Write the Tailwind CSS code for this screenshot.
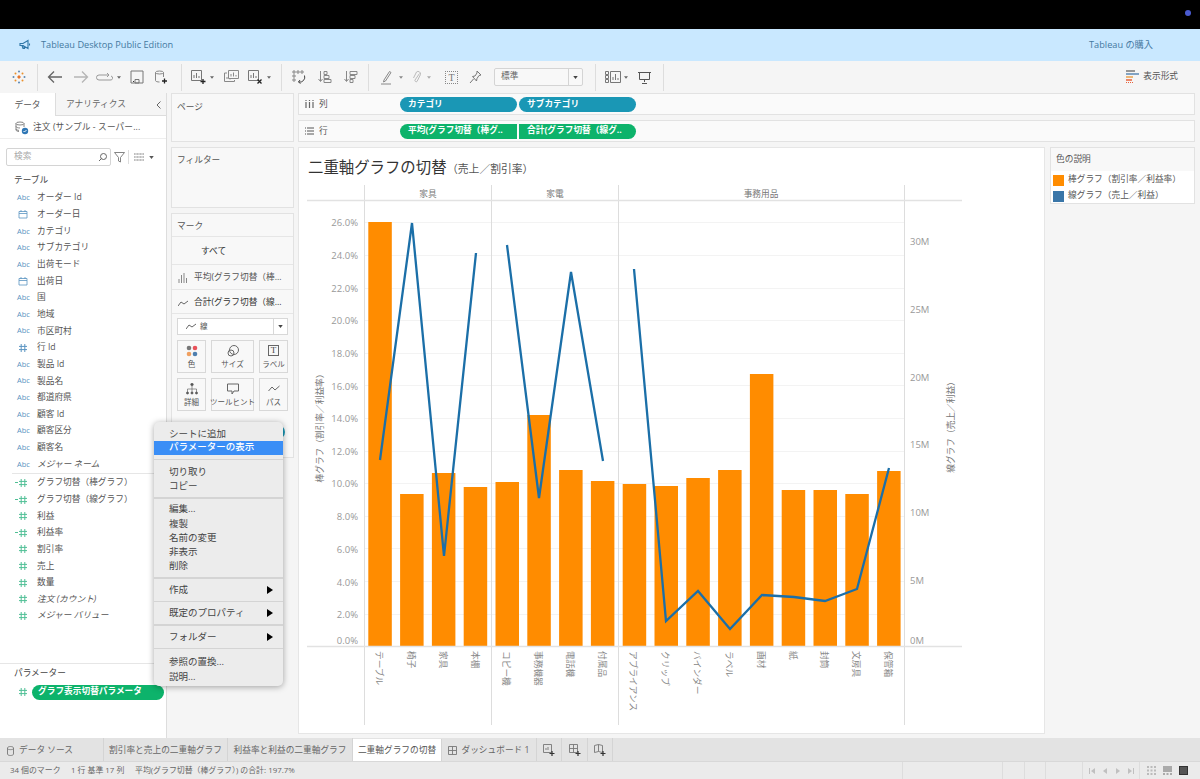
<!DOCTYPE html>
<html lang="ja">
<head>
  <meta charset="UTF-8">
  <title>Tableau Desktop Public Edition</title>
  <script src="https://cdn.jsdelivr.net/npm/@tailwindcss/browser@4"></script>
</head>
<body class="relative w-[1200px] h-[779px] overflow-hidden bg-[#f5f5f5] text-[#555] text-[8.7px] font-['Open_Sans','Noto_Sans_CJK_JP',sans-serif]">
  <!-- shared icons -->
  <svg class="hidden">
    <symbol id="hash" viewBox="0 0 10 10"><path d="M3.2 1v8M6.8 1v8M1 3.4h8M1 6.6h8" fill="none" stroke="currentColor" stroke-width="1"/></symbol>
    <symbol id="cal" viewBox="0 0 10 10"><path d="M1 2.5h8v6.5h-8zM1 4.5h8M3 1v2M7 1v2" fill="none" stroke="currentColor" stroke-width=".8"/></symbol>
    <symbol id="caret" viewBox="0 0 6 4"><path d="M0 0h6l-3 4z" fill="currentColor"/></symbol>
  </svg>

  <!-- top black strip -->
  <div class="relative h-[29px] bg-black">
    <span class="absolute left-[1185px] top-[10px] w-[6px] h-[6px] rounded-full bg-[#4a5bd0]"></span>
  </div>

  <!-- banner -->
  <div class="flex items-center h-[32px] bg-[#c9e8ff] text-[#44799f] text-[9.200px]">
    <svg class="ml-[19px] w-[12px] h-[12px]" viewBox="0 0 12 12" fill="none" stroke="#2f77a8" stroke-width="1.1"><path d="M1 4.5h3l5-3v8l-5-3h-3zM3 6.5l1 3h1.5l-1-3M10.500 4.500v2"/></svg>
    <span class="ml-[10px]">Tableau Desktop Public Edition</span>
    <span class="ml-auto mr-[47px]">Tableau の購入</span>
  </div>

  <!-- toolbar -->
  <div class="flex items-center h-[32px] bg-[#f5f5f5] text-[#777]">
    <div class="flex items-center justify-center w-[38px] h-[27px] border-r border-[#ddd]">
      <svg class="w-[14px] h-[14px]" viewBox="0 0 14 14"><g fill="#e8762c"><rect x="6" y="5.500" width="2" height="3"/><rect x="5.500" y="6" width="3" height="2"/></g><g fill="#5b87b2"><circle cx="7" cy="1.500" r="1"/><circle cx="7" cy="12.500" r="1"/><circle cx="1.500" cy="7" r="1"/><circle cx="12.500" cy="7" r="1"/></g><g fill="#eb912b"><circle cx="3.500" cy="3.500" r="1"/><circle cx="10.500" cy="3.500" r="1"/><circle cx="3.500" cy="10.500" r="1"/><circle cx="10.500" cy="10.500" r="1"/></g></svg>
    </div>
    <div class="flex items-center w-[144px] h-[27px] border-r border-[#ddd]">
      <svg class="ml-[9px] w-[16px] h-[14px]" viewBox="0 0 16 14" fill="none" stroke="#666" stroke-width="1.3"><path d="M15 7H2M7 1.500 1.500 7 7 12.500"/></svg>
      <svg class="ml-[10px] w-[16px] h-[14px]" viewBox="0 0 16 14" fill="none" stroke="#b5b5b5" stroke-width="1.3"><path d="M1 7h13M9 1.500 14.500 7 9 12.500"/></svg>
      <svg class="ml-[7px] w-[17px] h-[10px]" viewBox="0 0 17 10" fill="none" stroke="#999" stroke-width="1"><path d="M12 3H3a2 2 0 0 0 0 5h11a2 2 0 0 0 1-4M11 1l2 2-2 2"/></svg>
      <svg class="ml-[4px] w-[4px] h-[3px] text-[#666]"><use href="#caret"/></svg>
      <svg class="ml-[9px] w-[14px] h-[14px]" viewBox="0 0 14 14" fill="none" stroke="#777" stroke-width="1"><path d="M1 1h12v12H1zM5 9.500h4V13H5z"/><path d="M3 11.500h1" stroke="#333"/></svg>
      <svg class="ml-[10px] w-[14px] h-[14px]" viewBox="0 0 14 14" fill="none" stroke="#888" stroke-width="1"><ellipse cx="5.500" cy="2.500" rx="4" ry="1.500"/><path d="M1.500 2.500v8c0 1 2 1.500 4 1.500M9.500 2.500V7"/><path d="M10.500 8.500v5M8 11h5" stroke="#222" stroke-width="1.300"/></svg>
    </div>
    <div class="flex items-center w-[100px] h-[27px] border-r border-[#ddd]">
      <svg class="ml-[9px] w-[15px] h-[14px]" viewBox="0 0 15 14" fill="none" stroke="#777" stroke-width="1"><path d="M.5.500h10v10H.5zM3 8V5M5.500 8V3M8 8V6"/><path d="M12 9v5M9.500 11.500h5" stroke="#222" stroke-width="1.300"/></svg>
      <svg class="ml-[4px] w-[4px] h-[3px] text-[#666]"><use href="#caret"/></svg>
      <svg class="ml-[10px] w-[15px] h-[14px]" viewBox="0 0 15 14" fill="none" stroke="#888" stroke-width="1"><path d="M4.500.500h10v8h-10zM7 6.500V4M9.500 6.500V2.500M12 6.500V5M3 3H.5v8.500h10V10M3 9V7M6 9.500V8"/></svg>
      <svg class="ml-[9px] w-[15px] h-[14px]" viewBox="0 0 15 14" fill="none" stroke="#777" stroke-width="1"><path d="M.5.500h10v10H.5zM3 8V5M5.500 8V3M8 8V6"/><path d="M9.500 9.500l4 4M13.500 9.500l-4 4" stroke="#222" stroke-width="1.300"/></svg>
      <svg class="ml-[4px] w-[4px] h-[3px] text-[#666]"><use href="#caret"/></svg>
    </div>
    <div class="flex items-center w-[87px] h-[27px] border-r border-[#ddd] text-[#888]">
      <svg class="ml-[10px] w-[14px] h-[14px]" viewBox="0 0 14 14" fill="none" stroke="#888" stroke-width="1"><path d="M1 1h2v2H1zM5 1h2v2H5zM9 1h2v2H9zM1 5h2v2H1zM1 9h2v2H1z"/><path d="M12.500 5.500a5 5 0 0 1-6 6.500M8 10l-1.500 2 2 1.500" stroke="#444"/></svg>
      <svg class="ml-[12px] w-[14px] h-[14px]" viewBox="0 0 14 14" fill="none" stroke="#888" stroke-width="1"><path d="M2.500 1v10M.5 9l2 2.500L4.500 9M6 1.500h3v3H6zM6 5.500h5v3H6zM6 9.500h7v3H6z"/></svg>
      <svg class="ml-[12px] w-[14px] h-[14px]" viewBox="0 0 14 14" fill="none" stroke="#888" stroke-width="1"><path d="M2.500 1v10M.5 9l2 2.500L4.500 9M6 1.500h7v3H6zM6 5.500h5v3H6zM6 9.500h3v3H6z"/></svg>
    </div>
    <div class="flex items-center w-[227px] h-[27px] border-r border-[#ddd] text-[#444]">
      <svg class="ml-[12px] w-[11px] h-[15px]" viewBox="0 0 11 15" fill="none" stroke="#888" stroke-width="1"><path d="M3 10 8.500 1.500l1.500 1L4.500 11l-2 1zM0 14h10"/></svg>
      <svg class="ml-[7px] w-[4px] h-[3px] text-[#888]"><use href="#caret"/></svg>
      <svg class="ml-[9px] w-[10px] h-[14px]" viewBox="0 0 10 14" fill="none" stroke="#bbb" stroke-width="1"><path d="M7.500 3.500 3 10a1.300 1.300 0 0 0 2 1.500l3.500-7a2.500 2.500 0 0 0-4-2.500L1.500 8"/></svg>
      <svg class="ml-[5px] w-[4px] h-[3px] text-[#aaa]"><use href="#caret"/></svg>
      <div class="ml-[14px] flex items-center justify-center w-[13px] h-[13px] border border-dotted border-[#888] font-['Liberation_Serif',serif] text-[10px] text-[#777]">T</div>
      <svg class="ml-[11px] w-[13px] h-[14px]" viewBox="0 0 13 14" fill="none" stroke="#777" stroke-width="1"><path d="M8 1l4 4-2 .5-2 3-.5 2.500L3.500 6.500 6 6l2-3zM4.500 9 1 13"/></svg>
      <div class="ml-[12px] flex items-center w-[89px] h-[18px] bg-[#f8f8f8] border border-[#d4d4d4] rounded-[2px]">
        <span class="ml-[6px] flex-1 text-[#666]">標準</span>
        <div class="flex items-center justify-center w-[14px] h-full border-l border-[#d4d4d4]"><svg class="w-[5px] h-[3px] text-[#444]"><use href="#caret"/></svg></div>
      </div>
    </div>
    <div class="flex items-center w-[68px] h-[27px] border-r border-[#ddd]">
      <svg class="ml-[9px] w-[16px] h-[12px]" viewBox="0 0 16 12" fill="none" stroke="#777" stroke-width="1"><path d="M.5.500h3v3h-3zM.5 4.500h3v3h-3zM.5 8.500h3v3h-3zM5.500.500h10v11h-10zM8 9V6M10.500 9V3M13 9V7"/></svg>
      <svg class="ml-[3px] w-[4px] h-[3px] text-[#666]"><use href="#caret"/></svg>
      <svg class="ml-[10px] w-[13px] h-[13px]" viewBox="0 0 13 13" fill="none" stroke="#555" stroke-width="1"><path d="M0 1.500h13M1.500 1.500v7h10v-7M6.500 8.500V11M4 12.500h5"/></svg>
    </div>
    <div class="ml-auto mr-[22px] flex items-center text-[#555]">
      <svg class="w-[13px] h-[13px] mr-[4px]" viewBox="0 0 13 13"><path d="M0 1h9" stroke="#777" stroke-width="1.500"/><path d="M0 4h13" stroke="#5b87b2" stroke-width="1.500"/><path d="M0 7h7" stroke="#e8a24c" stroke-width="1.500"/><path d="M0 10h6" stroke="#e8623c" stroke-width="1.500"/><path d="M0 12.500h7" stroke="#e8623c" stroke-width="1" stroke-dasharray="1 1"/></svg>
      <span>表示形式</span>
    </div>
  </div>

  <!-- main area -->
  <div class="flex h-[645px]">
    <!-- data pane -->
    <div class="flex flex-col w-[167px] h-full bg-white border-r border-[#ddd]">
      <div class="flex h-[23px] shrink-0">
        <div class="flex items-center justify-center w-[56px] pt-[2px] border-r border-[#ddd]">データ</div>
        <div class="flex items-center flex-1 pl-[10px] pt-[2px] bg-[#f5f5f5] border-b border-[#ddd] text-[#666]">アナリティクス<svg class="ml-auto mr-[5px] w-[5px] h-[8px]" viewBox="0 0 5 8" fill="none" stroke="#666"><path d="M4.500.500 1 4l3.500 3.500"/></svg></div>
      </div>
      <div class="flex items-center h-[23px] pt-[2px] shrink-0 border-b border-[#eee]">
        <svg class="ml-[15px] w-[14px] h-[14px]" viewBox="0 0 14 14" fill="none" stroke="#777" stroke-width=".9"><ellipse cx="5" cy="2.500" rx="4" ry="1.500"/><path d="M1 2.500v6.500c0 .8 1.500 1.300 3 1.500M9 2.500V6M1 5.500c0 .8 2 1.500 4 1.500M1 8c0 .8 1.500 1.200 3 1.400"/><circle cx="10" cy="10" r="3.200" fill="#2f77b5" stroke="none"/><path d="M8.500 10l1 1 2-2" stroke="#fff"/></svg>
        <span class="ml-[4px] tracking-[.1px]">注文 (サンプル - スーパー...</span>
      </div>
      <div class="flex items-center mt-[9px] h-[18px] shrink-0">
        <div class="flex items-center ml-[6px] w-[105px] h-[18px] border border-[#d4d4d4] rounded-[2px] pl-[7px] text-[#aaa]">検索
          <svg class="ml-auto mr-[3px] w-[9px] h-[9px]" viewBox="0 0 9 9" fill="none" stroke="#666"><circle cx="5.500" cy="3.500" r="3"/><path d="M3.500 5.500 1 8"/></svg>
        </div>
        <svg class="ml-[3px] w-[11px] h-[11px]" viewBox="0 0 11 11" fill="none" stroke="#777" stroke-width=".9"><path d="M.5.500h10L6.500 5.500V10l-2-1V5.500z"/></svg>
        <span class="ml-[3px] w-px h-[14px] bg-[#ddd]"></span>
        <svg class="ml-[5px] w-[10px] h-[8px]" viewBox="0 0 10 8"><path d="M0 1h10M0 4h10M0 7h10" stroke="#aaa" stroke-width="1.500"/><path d="M2 0v8M5 0v8M8 0v8" stroke="#fff" stroke-width=".7"/></svg>
        <svg class="ml-[5px] w-[5px] h-[3px] text-[#555]"><use href="#caret"/></svg>
      </div>
      <div class="flex items-center mt-[8px] h-[14px] pl-[14px] text-[#444] shrink-0">テーブル</div>

      <!-- field list -->
      <div class="flex-1 mt-[1.500px]">
        <div class="flex items-center h-[16.67px]"><span class="w-[37px] pl-[17px] text-[7.500px] text-[#5a94c2]">Abc</span>オーダー Id</div>
        <div class="flex items-center h-[16.67px]"><span class="w-[37px] pl-[18px]"><svg class="w-[10px] h-[10px] text-[#5a94c2]"><use href="#cal"/></svg></span>オーダー日</div>
        <div class="flex items-center h-[16.67px]"><span class="w-[37px] pl-[17px] text-[7.500px] text-[#5a94c2]">Abc</span>カテゴリ</div>
        <div class="flex items-center h-[16.67px]"><span class="w-[37px] pl-[17px] text-[7.500px] text-[#5a94c2]">Abc</span>サブカテゴリ</div>
        <div class="flex items-center h-[16.67px]"><span class="w-[37px] pl-[17px] text-[7.500px] text-[#5a94c2]">Abc</span>出荷モード</div>
        <div class="flex items-center h-[16.67px]"><span class="w-[37px] pl-[18px]"><svg class="w-[10px] h-[10px] text-[#5a94c2]"><use href="#cal"/></svg></span>出荷日</div>
        <div class="flex items-center h-[16.67px]"><span class="w-[37px] pl-[17px] text-[7.500px] text-[#5a94c2]">Abc</span>国</div>
        <div class="flex items-center h-[16.67px]"><span class="w-[37px] pl-[17px] text-[7.500px] text-[#5a94c2]">Abc</span>地域</div>
        <div class="flex items-center h-[16.67px]"><span class="w-[37px] pl-[17px] text-[7.500px] text-[#5a94c2]">Abc</span>市区町村</div>
        <div class="flex items-center h-[16.67px]"><span class="w-[37px] pl-[18px]"><svg class="w-[10px] h-[10px] text-[#5a94c2]"><use href="#hash"/></svg></span>行 Id</div>
        <div class="flex items-center h-[16.67px]"><span class="w-[37px] pl-[17px] text-[7.500px] text-[#5a94c2]">Abc</span>製品 Id</div>
        <div class="flex items-center h-[16.67px]"><span class="w-[37px] pl-[17px] text-[7.500px] text-[#5a94c2]">Abc</span>製品名</div>
        <div class="flex items-center h-[16.67px]"><span class="w-[37px] pl-[17px] text-[7.500px] text-[#5a94c2]">Abc</span>都道府県</div>
        <div class="flex items-center h-[16.67px]"><span class="w-[37px] pl-[17px] text-[7.500px] text-[#5a94c2]">Abc</span>顧客 Id</div>
        <div class="flex items-center h-[16.67px]"><span class="w-[37px] pl-[17px] text-[7.500px] text-[#5a94c2]">Abc</span>顧客区分</div>
        <div class="flex items-center h-[16.67px]"><span class="w-[37px] pl-[17px] text-[7.500px] text-[#5a94c2]">Abc</span>顧客名</div>
        <div class="flex items-center h-[16.67px]"><span class="w-[37px] pl-[17px] text-[7.500px] text-[#5a94c2]">Abc</span><i>メジャー ネーム</i></div>
        <div class="ml-[12px] h-[2px] border-t border-[#e6e6e6]"></div>
        <div class="flex items-center h-[16.63px]"><span class="flex items-center w-[37px] pl-[15px]"><span class="w-[3px] h-px bg-[#4fbf95]"></span><svg class="w-[10px] h-[10px] text-[#4fbf95]"><use href="#hash"/></svg></span>グラフ切替（棒グラフ）</div>
        <div class="flex items-center h-[16.63px]"><span class="flex items-center w-[37px] pl-[15px]"><span class="w-[3px] h-px bg-[#4fbf95]"></span><svg class="w-[10px] h-[10px] text-[#4fbf95]"><use href="#hash"/></svg></span>グラフ切替（線グラフ）</div>
        <div class="flex items-center h-[16.63px]"><span class="w-[37px] pl-[18px]"><svg class="w-[10px] h-[10px] text-[#4fbf95]"><use href="#hash"/></svg></span>利益</div>
        <div class="flex items-center h-[16.63px]"><span class="flex items-center w-[37px] pl-[15px]"><span class="w-[3px] h-px bg-[#4fbf95]"></span><svg class="w-[10px] h-[10px] text-[#4fbf95]"><use href="#hash"/></svg></span>利益率</div>
        <div class="flex items-center h-[16.63px]"><span class="w-[37px] pl-[18px]"><svg class="w-[10px] h-[10px] text-[#4fbf95]"><use href="#hash"/></svg></span>割引率</div>
        <div class="flex items-center h-[16.63px]"><span class="w-[37px] pl-[18px]"><svg class="w-[10px] h-[10px] text-[#4fbf95]"><use href="#hash"/></svg></span>売上</div>
        <div class="flex items-center h-[16.63px]"><span class="w-[37px] pl-[18px]"><svg class="w-[10px] h-[10px] text-[#4fbf95]"><use href="#hash"/></svg></span>数量</div>
        <div class="flex items-center h-[16.63px]"><span class="w-[37px] pl-[18px]"><svg class="w-[10px] h-[10px] text-[#4fbf95]"><use href="#hash"/></svg></span><i>注文 (カウント)</i></div>
        <div class="flex items-center h-[16.63px]"><span class="w-[37px] pl-[18px]"><svg class="w-[10px] h-[10px] text-[#4fbf95]"><use href="#hash"/></svg></span><i>メジャー バリュー</i></div>
      </div>

      <!-- parameters -->
      <div class="h-[75px] shrink-0 border-t border-[#e6e6e6]">
        <div class="flex items-center h-[20px] pl-[14px] text-[#444]">パラメーター</div>
        <div class="flex items-center h-[16px]">
          <svg class="ml-[18px] w-[10px] h-[10px] text-[#4fbf95]"><use href="#hash"/></svg>
          <div class="ml-[4px] flex items-center w-[132px] h-[15px] pl-[6px] rounded-full bg-[#0db36b] text-white font-bold">グラフ表示切替パラメータ</div>
        </div>
      </div>
    </div>

    <!-- cards column -->
    <div class="flex flex-col ml-[4px] w-[123px] shrink-0">
      <div class="h-[49px] px-[5px] pt-[7px] bg-[#f8f8f8] border border-[#e2e2e2]">ページ</div>
      <div class="mt-[5px] h-[61px] px-[5px] pt-[6px] bg-[#f8f8f8] border border-[#e2e2e2]">フィルター</div>
      <div class="mt-[5px] h-[245px] bg-[#f8f8f8] border border-[#e2e2e2]">
        <div class="flex items-center h-[23px] pl-[5px] pt-[3px] border-b border-[#e6e6e6]">マーク</div>
        <div class="flex items-center h-[28px] pl-[29px] pt-[3px] border-b border-[#e6e6e6] text-[#333]">すべて</div>
        <div class="flex items-center h-[25px] pl-[6px] pt-[2px] border-b border-[#e6e6e6]">
          <svg class="w-[10px] h-[10px]" viewBox="0 0 10 10" stroke="#888"><path d="M1 10V6M3.500 10V2M6 10V0M8.500 10V5"/></svg>
          <span class="ml-[6px]">平均(グラフ切替（棒...</span>
        </div>
        <div class="flex items-center h-[24px] pl-[6px] pt-[3px] border-b border-[#e6e6e6] text-[#333]">
          <svg class="w-[10px] h-[7px]" viewBox="0 0 10 7" fill="none" stroke="#666"><path d="M0 6 3 2l3 2 4-3"/></svg>
          <span class="ml-[6px]">合計(グラフ切替（線...</span>
        </div>
        <div class="flex items-center mt-[4px] mx-[5px] h-[17px] bg-white border border-[#d8d8d8]">
          <svg class="ml-[8px] w-[10px] h-[7px]" viewBox="0 0 10 7" fill="none" stroke="#666"><path d="M0 6 3 2l3 2 4-3"/></svg>
          <span class="ml-[4px] flex-1 text-[7.500px]">線</span>
          <div class="flex items-center justify-center w-[14px] h-full border-l border-[#d8d8d8]"><svg class="w-[5px] h-[3px] text-[#444]"><use href="#caret"/></svg></div>
        </div>
        <div class="flex mt-[5px] mx-[5px] gap-[5px]">
          <div class="flex flex-col items-center w-[29px] h-[33px] pt-[4px] border border-[#d8d8d8] text-[7.500px]">
            <svg class="w-[12px] h-[12px]" viewBox="0 0 12 12"><circle cx="3" cy="3" r="2.300" fill="#777"/><circle cx="9" cy="3" r="2.300" fill="#e8525a"/><circle cx="3" cy="9" r="2.300" fill="#f0a060"/><circle cx="9" cy="9" r="2.300" fill="#4e7fae"/></svg>
            <span class="mt-[2px]">色</span>
          </div>
          <div class="flex flex-col items-center w-[43px] h-[33px] pt-[4px] border border-[#d8d8d8] text-[7.500px]">
            <svg class="w-[12px] h-[12px]" viewBox="0 0 12 12" fill="none" stroke="#666"><circle cx="7" cy="5" r="4.500"/><circle cx="4" cy="8" r="3"/></svg>
            <span class="mt-[2px]">サイズ</span>
          </div>
          <div class="flex flex-col items-center w-[29px] h-[33px] pt-[4px] border border-[#d8d8d8] text-[7.500px]">
            <div class="flex items-center justify-center w-[11px] h-[11px] border border-[#666] font-['Liberation_Serif',serif] text-[9px] text-[#444]">T</div>
            <span class="mt-[3px]">ラベル</span>
          </div>
        </div>
        <div class="flex mt-[5px] mx-[5px] gap-[5px]">
          <div class="flex flex-col items-center w-[29px] h-[33px] pt-[4px] border border-[#d8d8d8] text-[7.500px]">
            <svg class="w-[12px] h-[12px]" viewBox="0 0 12 12" fill="#555" stroke="#555" stroke-width=".6"><circle cx="6" cy="1.500" r="1.300"/><circle cx="1.500" cy="10" r="1.100"/><circle cx="6" cy="10" r="1.100"/><circle cx="10.500" cy="10" r="1.100"/><path d="M6 3v7M1.500 9V6h9v3" fill="none"/></svg>
            <span class="mt-[2px]">詳細</span>
          </div>
          <div class="flex flex-col items-center w-[43px] h-[33px] pt-[4px] border border-[#d8d8d8] text-[7.500px]">
            <svg class="w-[12px] h-[12px]" viewBox="0 0 12 12" fill="none" stroke="#666"><path d="M.5 1h11v7H7l-2 3V8H.5z"/></svg>
            <span class="mt-[2px] whitespace-nowrap">ツールヒント</span>
          </div>
          <div class="flex flex-col items-center w-[29px] h-[33px] pt-[4px] border border-[#d8d8d8] text-[7.500px]">
            <svg class="w-[12px] h-[12px]" viewBox="0 0 12 12" fill="none" stroke="#666"><path d="M.5 8 4 4l3 3 4.500-4"/></svg>
            <span class="mt-[2px]">パス</span>
          </div>
        </div>
      </div>
    </div>

    <!-- shelves and view -->
    <div class="flex flex-col ml-[4px] w-[897px] shrink-0">
      <div class="flex items-center h-[22px] bg-[#fafafa] border border-[#e2e2e2]">
        <div class="flex items-center w-[101px] pl-[6px] pt-[1px]">
          <svg class="w-[9px] h-[8px]" viewBox="0 0 9 8" stroke="#666" stroke-width="1.200"><path d="M1 2v6M4.500 2v6M8 2v6"/><path d="M1 0v1M4.500 0v1M8 0v1"/></svg>
          <span class="ml-[5px]">列</span>
        </div>
        <div class="flex items-center w-[117px] h-[15px] pl-[8px] pt-[1px] rounded-full bg-[#1a97b5] text-white font-bold">カテゴリ</div>
        <div class="ml-[2px] flex items-center w-[117px] h-[15px] pl-[8px] pt-[1px] rounded-full bg-[#1a97b5] text-white font-bold">サブカテゴリ</div>
      </div>
      <div class="flex items-center mt-[5px] h-[22px] bg-[#fafafa] border border-[#e2e2e2]">
        <div class="flex items-center w-[101px] pl-[6px] pt-[1px]">
          <svg class="w-[9px] h-[8px]" viewBox="0 0 9 8" stroke="#555"><path d="M2 1h7M2 4h7M2 7h7M0 1h1M0 4h1M0 7h1"/></svg>
          <span class="ml-[5px]">行</span>
        </div>
        <div class="flex items-center w-[117px] h-[15px] pl-[8px] rounded-l-full bg-[#0db36b] text-white font-bold whitespace-nowrap">平均(グラフ切替（棒グ..</div>
        <div class="ml-[2px] flex items-center w-[117px] h-[15px] pl-[8px] rounded-r-full bg-[#0db36b] text-white font-bold whitespace-nowrap">合計(グラフ切替（線グ..</div>
      </div>
      <div class="flex mt-[5px]">
        <!-- view -->
        <div class="w-[747px] h-[587px] bg-white border border-[#e6e6e6]">
          <svg class="block w-[745px] h-[585px]" viewBox="299 148 745 585" fill="#999" font-size="9.500">
            <text x="308" y="173" font-size="15.400" fill="#333">二重軸グラフの切替</text>
            <text x="447" y="173" font-size="10.800" fill="#555" class="[text-spacing-trim:space-all]">（売上／割引率）</text>
            <!-- gridlines -->
            <g stroke="#f3f3f3" stroke-width="1">
              <path d="M365 222.500h539M365 255.500h539M365 288.500h539M365 320.500h539M365 353.500h539M365 385.500h539M365 418.500h539M365 451.500h539M365 483.500h539M365 516.500h539M365 548.500h539M365 581.500h539M365 614.500h539"/>
            </g>
            <!-- bars -->
            <g fill="#ff8c00">
              <rect x="368.300" y="222" width="23.500" height="424"/>
              <rect x="400.100" y="494" width="23.500" height="152"/>
              <rect x="431.900" y="473" width="23.500" height="173"/>
              <rect x="463.700" y="487" width="23.500" height="159"/>
              <rect x="495.500" y="482" width="23.500" height="164"/>
              <rect x="527.300" y="415" width="23.500" height="231"/>
              <rect x="559.100" y="470" width="23.500" height="176"/>
              <rect x="590.900" y="481" width="23.500" height="165"/>
              <rect x="622.700" y="484" width="23.500" height="162"/>
              <rect x="654.500" y="486" width="23.500" height="160"/>
              <rect x="686.300" y="478" width="23.500" height="168"/>
              <rect x="718.100" y="470" width="23.500" height="176"/>
              <rect x="749.900" y="374" width="23.500" height="272"/>
              <rect x="781.700" y="490" width="23.500" height="156"/>
              <rect x="813.500" y="490" width="23.500" height="156"/>
              <rect x="845.300" y="494" width="23.500" height="152"/>
              <rect x="877.100" y="471" width="23.500" height="175"/>
            </g>
            <!-- separators -->
            <g stroke="#ddd" stroke-width="1">
              <path d="M364.500 185v540M491.500 185v540M618.500 185v540M904.500 185v540"/>
            </g>
            <path d="M307 200.500h655M307 646.500h655" stroke="#e2e2e2" stroke-width="1.500"/>
            <!-- lines -->
            <g fill="none" stroke="#1b6fa8" stroke-width="2.300" stroke-linejoin="miter">
              <path d="M380 460 412 223 444 556 476 253"/>
              <path d="M507 245 539 498 571 272 603 461"/>
              <path d="M634 269 666 621 698 591 730 629 762 595 794 597 825 601 857 589 889 468"/>
            </g>
            <!-- headers -->
            <g text-anchor="middle" font-size="8.700" fill="#777">
              <text x="428" y="197">家具</text>
              <text x="555" y="197">家電</text>
              <text x="761" y="197">事務用品</text>
            </g>
            <!-- left axis -->
            <g text-anchor="end">
              <text x="358" y="226">26.0%</text><text x="358" y="259">24.0%</text><text x="358" y="292">22.0%</text><text x="358" y="324">20.0%</text><text x="358" y="357">18.0%</text><text x="358" y="390">16.0%</text><text x="358" y="422">14.0%</text><text x="358" y="455">12.0%</text><text x="358" y="487">10.0%</text><text x="358" y="520">8.0%</text><text x="358" y="553">6.0%</text><text x="358" y="586">4.0%</text><text x="358" y="618">2.0%</text><text x="358" y="644">0.0%</text>
            </g>
            <!-- right axis -->
            <g>
              <text x="910" y="245">30M</text><text x="910" y="313">25M</text><text x="910" y="381">20M</text><text x="910" y="448">15M</text><text x="910" y="516">10M</text><text x="910" y="584">5M</text><text x="910" y="644">0M</text>
            </g>
            <text transform="translate(323 426) rotate(-90)" text-anchor="middle" font-size="8.700" fill="#777">棒グラフ（割引率／利益率）</text>
            <text transform="translate(954 425) rotate(-90)" text-anchor="middle" font-size="8.700" fill="#777">線グラフ（売上／利益）</text>
            <!-- sub categories -->
            <g font-size="8.700" fill="#888">
              <text transform="translate(376 651) rotate(90)">テーブル</text>
              <text transform="translate(408 651) rotate(90)">椅子</text>
              <text transform="translate(440 651) rotate(90)">家具</text>
              <text transform="translate(472 651) rotate(90)">本棚</text>
              <text transform="translate(503 651) rotate(90)">コピー機</text>
              <text transform="translate(535 651) rotate(90)">事務機器</text>
              <text transform="translate(567 651) rotate(90)">電話機</text>
              <text transform="translate(599 651) rotate(90)">付属品</text>
              <text transform="translate(630 651) rotate(90)">アプライアンス</text>
              <text transform="translate(662 651) rotate(90)">クリップ</text>
              <text transform="translate(694 651) rotate(90)">バインダー</text>
              <text transform="translate(726 651) rotate(90)">ラベル</text>
              <text transform="translate(758 651) rotate(90)">画材</text>
              <text transform="translate(790 651) rotate(90)">紙</text>
              <text transform="translate(821 651) rotate(90)">封筒</text>
              <text transform="translate(853 651) rotate(90)">文房具</text>
              <text transform="translate(885 651) rotate(90)">保管箱</text>
            </g>
          </svg>
        </div>
        <!-- legend -->
        <div class="ml-[5px] w-[145px] h-[57px] bg-white border border-[#e2e2e2]">
          <div class="flex items-center h-[23px] pl-[5px] pt-[1px] bg-[#f8f8f8]">色の説明</div>
          <div class="flex items-center h-[16px] pl-[2px] mt-[1px]"><span class="w-[11px] h-[11px] bg-[#ff8c00] mr-[4px]"></span>棒グラフ（割引率／利益率）</div>
          <div class="flex items-center h-[16px] pl-[2px]"><span class="w-[11px] h-[11px] bg-[#3a76a8] mr-[4px]"></span>線グラフ（売上／利益）</div>
        </div>
      </div>
    </div>
  </div>

  <!-- sheet tabs -->
  <div class="flex h-[24px] bg-[#e3e3e3] border-b border-[#d8d8d8] text-[#666]">
    <div class="flex items-center w-[104px] pl-[7px] pt-[2px] border-r border-[#d4d4d4]">
      <svg class="w-[7px] h-[10px]" viewBox="0 0 7 10" fill="none" stroke="#777" stroke-width=".9"><path d="M.5 2v6c0 2 6 2 6 0V2c0-2-6-2-6 0zM.5 2.500c0 1.500 6 1.500 6 0"/></svg>
      <span class="ml-[5px]">データ ソース</span>
    </div>
    <div class="flex items-center justify-center w-[124px] pt-[2px] border-r border-[#d4d4d4]">割引率と売上の二重軸グラフ</div>
    <div class="flex items-center justify-center w-[125px] pt-[2px] border-r border-[#d4d4d4]">利益率と利益の二重軸グラフ</div>
    <div class="flex items-center justify-center w-[89px] mt-px pt-[1px] bg-white border-r border-[#d4d4d4] text-[#555]">二重軸グラフの切替</div>
    <div class="flex items-center justify-center w-[95px] pt-[2px] border-r border-[#d4d4d4]">
      <svg class="w-[9px] h-[9px] mr-[4px]" viewBox="0 0 9 9" fill="none" stroke="#777" stroke-width=".9"><path d="M.5.500h8v8h-8zM.5 4.500h8M4.500.500v8"/></svg>
      ダッシュボード 1
    </div>
    <div class="flex items-center justify-center w-[25px] border-r border-[#d4d4d4]">
      <svg class="w-[12px] h-[12px]" viewBox="0 0 12 12" fill="none" stroke="#777" stroke-width=".9"><path d="M.5.500h8v8h-8zM3 6V4M5 6V3"/><path d="M9 7v5M6.500 9.500h5" stroke="#333" stroke-width="1.200"/></svg>
    </div>
    <div class="flex items-center justify-center w-[26px] border-r border-[#d4d4d4]">
      <svg class="w-[12px] h-[12px]" viewBox="0 0 12 12" fill="none" stroke="#777" stroke-width=".9"><path d="M.5.500h8v8h-8zM.5 4.500h8M4.500.500v8"/><path d="M9 7v5M6.500 9.500h5" stroke="#333" stroke-width="1.200"/></svg>
    </div>
    <div class="flex items-center justify-center w-[25px] border-r border-[#d4d4d4]">
      <svg class="w-[12px] h-[12px]" viewBox="0 0 12 12" fill="none" stroke="#777" stroke-width=".9"><path d="M.5 1.500 4.500.500l4 1v7l-4-1-4 1zM4.500.500v7"/><path d="M9 7v5M6.500 9.500h5" stroke="#333" stroke-width="1.200"/></svg>
    </div>
  </div>

  <!-- status bar -->
  <div class="flex items-center h-[17px] bg-[#ebebeb] text-[#666] text-[7.900px]">
    <span class="w-[61px] ml-[10px] pt-[1px]">34 個のマーク</span>
    <span class="w-[64px] pt-[1px]">1 行 基準 17 列</span>
    <span class="pt-[1px]">平均(グラフ切替（棒グラフ）) の合計: 197.7%</span>
    <div class="ml-auto flex items-center h-full">
      <span class="w-[100px] h-full border-l border-[#ddd]"></span>
      <span class="w-[22px] h-full border-l border-[#ddd]"></span>
      <span class="w-[21px] h-full border-l border-[#ddd]"></span>
      <span class="w-[37px] h-full border-l border-[#ddd]"></span>
      <div class="flex items-center w-[57px] h-full pl-[6px] gap-[7px] border-l border-[#ddd]">
        <svg class="w-[6px] h-[6px]" viewBox="0 0 6 6" fill="#c0c0c0"><path d="M0 0h1v6H0zM6 0v6L2 3z"/></svg>
        <svg class="w-[6px] h-[6px]" viewBox="0 0 6 6" fill="#c0c0c0"><path d="M5 0v6L1 3z"/></svg>
        <svg class="w-[6px] h-[6px]" viewBox="0 0 6 6" fill="#c0c0c0"><path d="M1 0v6l4-3z"/></svg>
        <svg class="w-[6px] h-[6px]" viewBox="0 0 6 6" fill="#c0c0c0"><path d="M5 0h1v6H5zM0 0v6l4-3z"/></svg>
      </div>
      <div class="flex items-center w-[61px] h-full pl-[7px] gap-[7px] border-l border-[#ddd]">
        <svg class="w-[9px] h-[9px]" viewBox="0 0 9 9" fill="#bbb"><path d="M0 0h2v2H0zM3.500 0h2v2h-2zM7 0h2v2H7zM0 3.500h2v2H0zM3.500 3.500h2v2h-2zM7 3.500h2v2H7zM0 7h2v2H0zM3.500 7h2v2h-2zM7 7h2v2H7z"/></svg>
        <svg class="w-[9px] h-[9px]" viewBox="0 0 9 9" fill="#aaa"><path d="M0 0h9v6H0zM0 7h2v2H0zM3.500 7h2v2h-2zM7 7h2v2H7z"/></svg>
        <span class="w-[9px] h-[9px] bg-[#555] border border-[#333]"></span>
      </div>
    </div>
  </div>

  <!-- marks pill peeking out from the context menu -->
  <span class="absolute left-[276px] top-[425px] w-[9px] h-[14px] rounded-r-full bg-[#1a97b5]"></span>

  <!-- context menu -->
  <div class="absolute left-[154px] top-[422px] flex flex-col w-[129px] h-[264px] pt-[5px] rounded-[5px] bg-[#ececec] shadow-[0_1px_6px_rgba(0,0,0,.35)] text-[9.500px] text-[#444]">
    <div class="flex items-center h-[13.500px] pl-[15px]">シートに追加</div>
    <div class="flex items-center h-[14px] pl-[15px] bg-[#3a8ef6] text-white font-medium">パラメーターの表示</div>
    <div class="mt-[4px] mb-[5px] h-[1.500px] bg-[#d4d4d4]"></div>
    <div class="flex items-center h-[14px] pl-[15px]">切り取り</div>
    <div class="flex items-center h-[14px] pl-[15px]">コピー</div>
    <div class="my-[4px] h-[1.500px] bg-[#d4d4d4]"></div>
    <div class="flex items-center h-[14.200px] pl-[15px]">編集...</div>
    <div class="flex items-center h-[14.200px] pl-[15px]">複製</div>
    <div class="flex items-center h-[14.200px] pl-[15px]">名前の変更</div>
    <div class="flex items-center h-[14.200px] pl-[15px]">非表示</div>
    <div class="flex items-center h-[14.200px] pl-[15px]">削除</div>
    <div class="my-[4px] h-[1.500px] bg-[#d4d4d4]"></div>
    <div class="flex items-center justify-between h-[14px] pl-[15px] pr-[10px]">作成<span class="w-0 h-0 border-y-[4px] border-y-transparent border-l-[6px] border-l-black"></span></div>
    <div class="my-[4px] h-[1.500px] bg-[#d4d4d4]"></div>
    <div class="flex items-center justify-between h-[14px] pl-[15px] pr-[10px]">既定のプロパティ<span class="w-0 h-0 border-y-[4px] border-y-transparent border-l-[6px] border-l-black"></span></div>
    <div class="my-[4px] h-[1.500px] bg-[#d4d4d4]"></div>
    <div class="flex items-center justify-between h-[14px] pl-[15px] pr-[10px]">フォルダー<span class="w-0 h-0 border-y-[4px] border-y-transparent border-l-[6px] border-l-black"></span></div>
    <div class="mt-[4px] mb-[5px] h-[1.500px] bg-[#d4d4d4]"></div>
    <div class="flex items-center h-[15px] pl-[15px]">参照の置換...</div>
    <div class="flex items-center h-[15px] pl-[15px]">説明...</div>
  </div>
</body>
</html>
